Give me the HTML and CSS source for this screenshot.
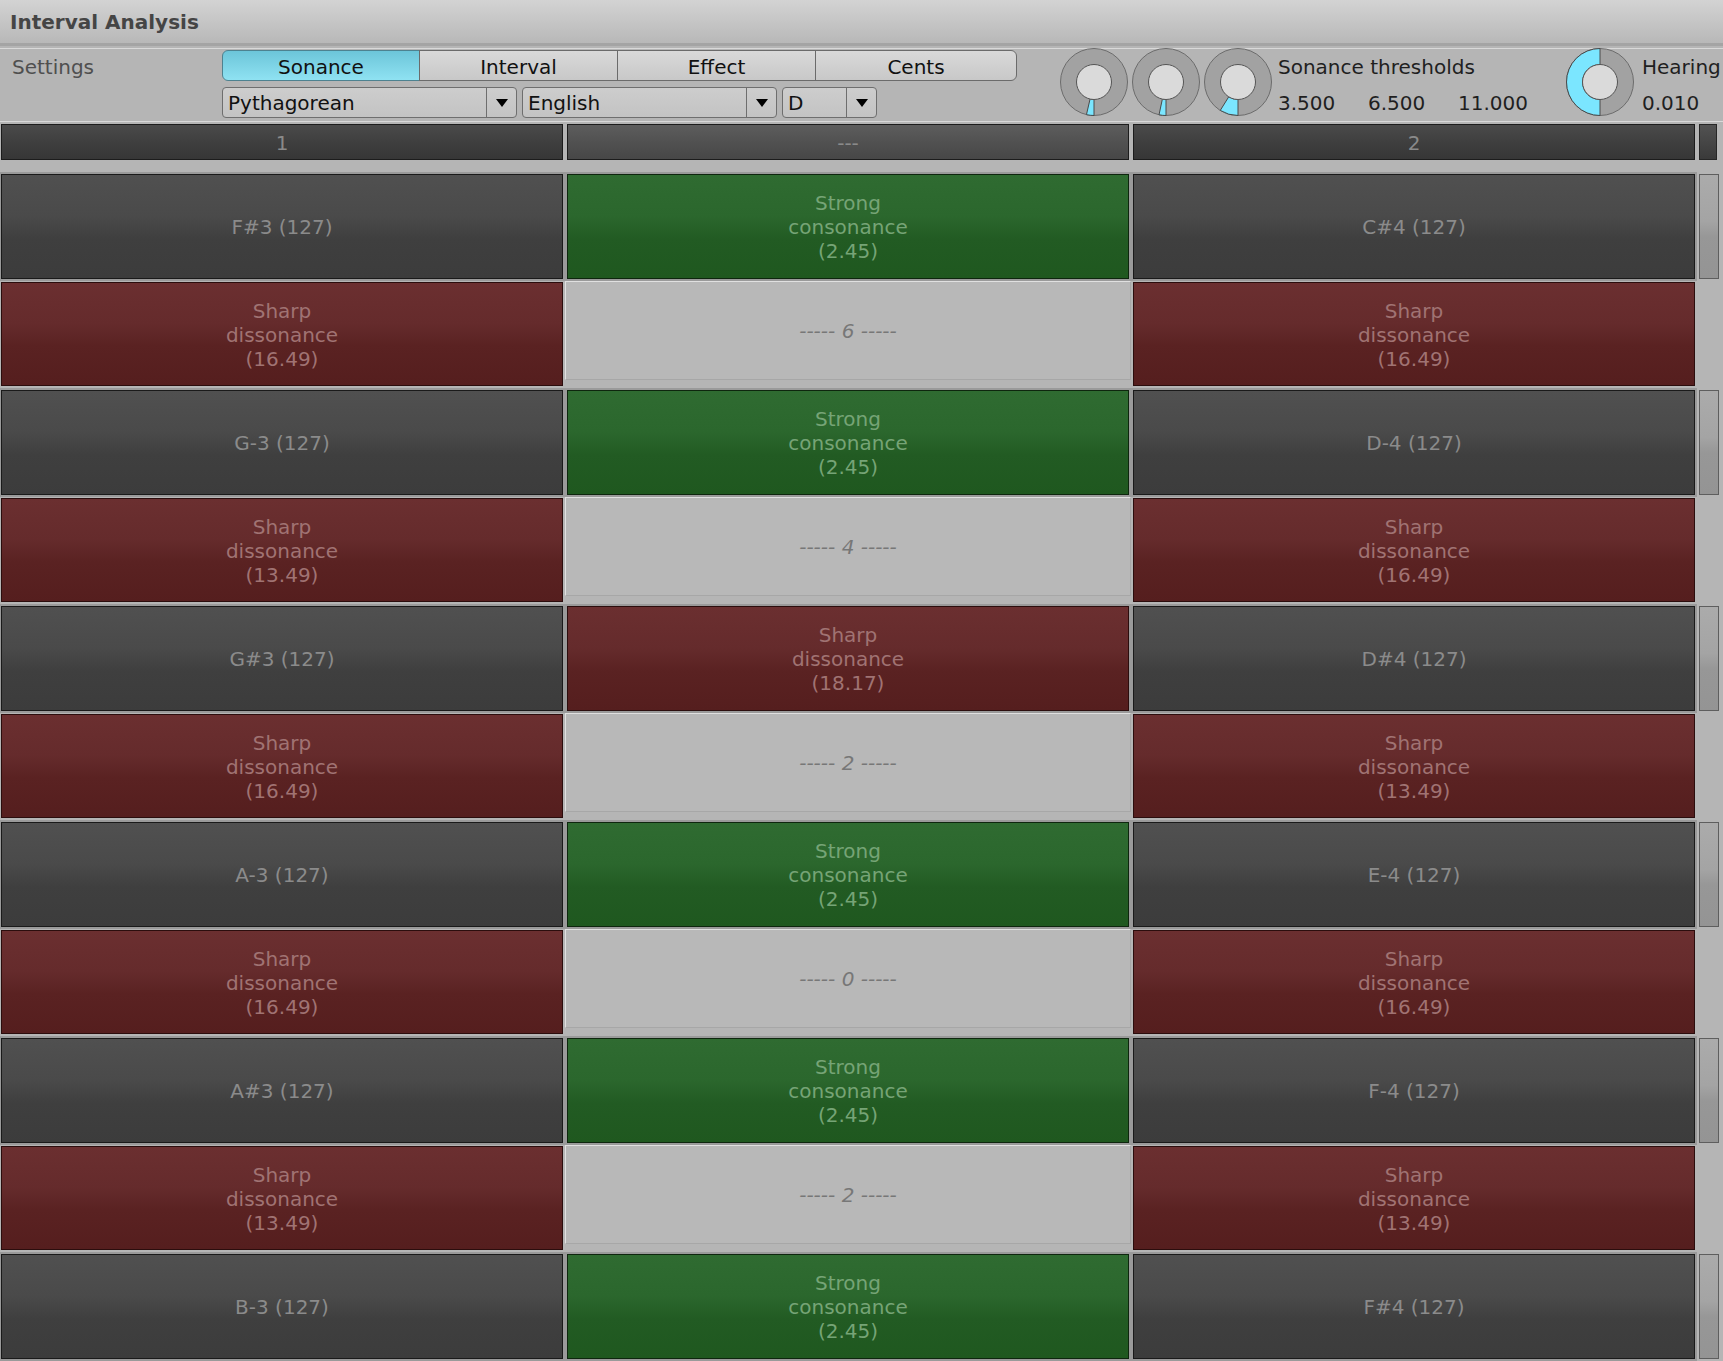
FILE: index.html
```html
<!DOCTYPE html>
<html lang="en">
<head>
<meta charset="utf-8">
<title>Interval Analysis</title>
<link rel="stylesheet" href="styles.css">
</head>
<body>
<div class="titlebar">Interval Analysis</div>

<div class="settings">
  <div class="settings-label">Settings</div>
  <div class="controls">
    <div class="tabs">
      <div class="tab tab-1 active">Sonance</div>
      <div class="tab tab-2">Interval</div>
      <div class="tab tab-3">Effect</div>
      <div class="tab tab-4">Cents</div>
    </div>
    <div class="selects">
      <div class="select sel-tuning"><span class="select-text">Pythagorean</span><span class="select-arrow"><svg width="12" height="8" viewBox="0 0 12 8"><polygon points="0,0 12,0 6,8" fill="#000"/></svg></span></div>
      <div class="select sel-lang"><span class="select-text">English</span><span class="select-arrow"><svg width="12" height="8" viewBox="0 0 12 8"><polygon points="0,0 12,0 6,8" fill="#000"/></svg></span></div>
      <div class="select sel-key"><span class="select-text">D</span><span class="select-arrow"><svg width="12" height="8" viewBox="0 0 12 8"><polygon points="0,0 12,0 6,8" fill="#000"/></svg></span></div>
    </div>
  </div>
  <div class="knobs">
    <svg class="knob" width="68" height="68" viewBox="0 0 68 68">
      <circle cx="34" cy="34" r="33.5" fill="#a2a2a2" stroke="#6c6c6c" stroke-width="1"/>
      <path d="M34 51.5 L34 67.5 A33.5 33.5 0 0 1 26.46 66.63 L30.06 51.05 A17.5 17.5 0 0 0 34 51.5 Z" fill="#7be6ff" stroke="#4a4a4a" stroke-width="1"/>
      <circle cx="34" cy="34" r="17.5" fill="#dadada" stroke="#555" stroke-width="1"/>
    </svg>
    <svg class="knob" width="68" height="68" viewBox="0 0 68 68">
      <circle cx="34" cy="34" r="33.5" fill="#a2a2a2" stroke="#6c6c6c" stroke-width="1"/>
      <path d="M34 51.5 L34 67.5 A33.5 33.5 0 0 1 27.03 66.77 L30.36 51.12 A17.5 17.5 0 0 0 34 51.5 Z" fill="#7be6ff" stroke="#4a4a4a" stroke-width="1"/>
      <circle cx="34" cy="34" r="17.5" fill="#dadada" stroke="#555" stroke-width="1"/>
    </svg>
    <svg class="knob" width="68" height="68" viewBox="0 0 68 68">
      <circle cx="34" cy="34" r="33.5" fill="#a2a2a2" stroke="#6c6c6c" stroke-width="1"/>
      <path d="M34 51.5 L34 67.5 A33.5 33.5 0 0 1 16.25 62.41 L24.73 48.84 A17.5 17.5 0 0 0 34 51.5 Z" fill="#7be6ff" stroke="#4a4a4a" stroke-width="1"/>
      <circle cx="34" cy="34" r="17.5" fill="#dadada" stroke="#555" stroke-width="1"/>
    </svg>
  </div>
  <div class="readout thresholds">
    <div class="readout-line">Sonance thresholds</div>
    <div class="readout-line second"><span class="val">3.500</span><span class="val">6.500</span><span>11.000</span></div>
  </div>
  <svg class="knob hearing-knob" width="68" height="68" viewBox="0 0 68 68">
    <circle cx="34" cy="34" r="33.5" fill="#a2a2a2" stroke="#6c6c6c" stroke-width="1"/>
    <path d="M34 51.5 L34 67.5 A33.5 33.5 0 0 1 34 0.5 L34 16.5 A17.5 17.5 0 0 0 34 51.5 Z" fill="#7be6ff" stroke="#4a4a4a" stroke-width="1"/>
    <circle cx="34" cy="34" r="17.5" fill="#dadada" stroke="#555" stroke-width="1"/>
  </svg>
  <div class="readout hearing">
    <div class="readout-line">Hearing</div>
    <div class="readout-line second">0.010</div>
  </div>
</div>

<div class="header-row">
  <div class="hcell">1</div>
  <div class="hcell mid">---</div>
  <div class="hcell">2</div>
  <div class="hscroll"></div>
</div>

<div class="rows">
  <div class="row-note">
    <div class="frame">
      <div class="cell dark">F#3 (127)</div>
      <div class="cell green">Strong<br>consonance<br>(2.45)</div>
      <div class="cell dark">C#4 (127)</div>
    </div>
    <div class="thumb"></div>
  </div>
  <div class="row-diss">
    <div class="cell red">Sharp<br>dissonance<br>(16.49)</div>
    <div class="gap-panel">----- 6 -----</div>
    <div class="cell red">Sharp<br>dissonance<br>(16.49)</div>
  </div>

  <div class="row-note">
    <div class="frame">
      <div class="cell dark">G-3 (127)</div>
      <div class="cell green">Strong<br>consonance<br>(2.45)</div>
      <div class="cell dark">D-4 (127)</div>
    </div>
    <div class="thumb"></div>
  </div>
  <div class="row-diss">
    <div class="cell red">Sharp<br>dissonance<br>(13.49)</div>
    <div class="gap-panel">----- 4 -----</div>
    <div class="cell red">Sharp<br>dissonance<br>(16.49)</div>
  </div>

  <div class="row-note">
    <div class="frame">
      <div class="cell dark">G#3 (127)</div>
      <div class="cell red">Sharp<br>dissonance<br>(18.17)</div>
      <div class="cell dark">D#4 (127)</div>
    </div>
    <div class="thumb"></div>
  </div>
  <div class="row-diss">
    <div class="cell red">Sharp<br>dissonance<br>(16.49)</div>
    <div class="gap-panel">----- 2 -----</div>
    <div class="cell red">Sharp<br>dissonance<br>(13.49)</div>
  </div>

  <div class="row-note">
    <div class="frame">
      <div class="cell dark">A-3 (127)</div>
      <div class="cell green">Strong<br>consonance<br>(2.45)</div>
      <div class="cell dark">E-4 (127)</div>
    </div>
    <div class="thumb"></div>
  </div>
  <div class="row-diss">
    <div class="cell red">Sharp<br>dissonance<br>(16.49)</div>
    <div class="gap-panel">----- 0 -----</div>
    <div class="cell red">Sharp<br>dissonance<br>(16.49)</div>
  </div>

  <div class="row-note">
    <div class="frame">
      <div class="cell dark">A#3 (127)</div>
      <div class="cell green">Strong<br>consonance<br>(2.45)</div>
      <div class="cell dark">F-4 (127)</div>
    </div>
    <div class="thumb"></div>
  </div>
  <div class="row-diss">
    <div class="cell red">Sharp<br>dissonance<br>(13.49)</div>
    <div class="gap-panel">----- 2 -----</div>
    <div class="cell red">Sharp<br>dissonance<br>(13.49)</div>
  </div>

  <div class="row-note">
    <div class="frame">
      <div class="cell dark">B-3 (127)</div>
      <div class="cell green">Strong<br>consonance<br>(2.45)</div>
      <div class="cell dark">F#4 (127)</div>
    </div>
    <div class="thumb"></div>
  </div>
</div>
</body>
</html>
```

FILE: styles.css
```css
* { box-sizing: border-box; }

html, body {
  margin: 0;
  padding: 0;
  overflow: hidden;
}

body {
  width: 1723px;
  height: 1361px;
  background: #b5b5b5;
  font-family: "DejaVu Sans", "Noto Sans", sans-serif;
  font-size: 20px;
}

/* ---------- title bar ---------- */
.titlebar {
  height: 46px;
  line-height: 45px;
  padding-left: 10px;
  font-weight: bold;
  color: #454545;
  background: linear-gradient(#d3d3d3, #b8b8b8);
  border-bottom: 3px solid #a4a4a4;
}

/* ---------- settings ---------- */
.settings {
  display: flex;
  align-items: flex-start;
  height: 77px;
  padding-top: 4px;
  background: linear-gradient(to bottom,
    #b5b5b5 0, #b5b5b5 2px,
    #d9d9d9 2px, #d9d9d9 3px,
    #b5b5b5 3px, #b5b5b5 calc(100% - 2px),
    #d9d9d9 calc(100% - 2px), #d9d9d9 calc(100% - 1px),
    #b5b5b5 calc(100% - 1px));
}

.settings-label {
  width: 222px;
  padding-left: 12px;
  padding-top: 3px;
  line-height: 28px;
  color: #4f4f4f;
}

.controls { width: 795px; }

.tabs {
  display: flex;
  height: 31px;
}

.tab {
  flex: none;
  padding-top: 3px;
  line-height: 26px;
  text-align: center;
  color: #111;
  border: 1px solid #6b6b6b;
  background: linear-gradient(#d9d9d9, #c8c8c8);
}
.tab + .tab { margin-left: -1px; }
.tab-1 { width: 198px; border-radius: 6px 0 0 6px; }
.tab-2 { width: 199px; }
.tab-3 { width: 199px; }
.tab-4 { width: 202px; border-radius: 0 6px 6px 0; }
.tab.active {
  background: linear-gradient(#6cc5d9, #8fe2f2);
  border-color: #4d8290;
}

.selects {
  display: flex;
  gap: 5px;
  margin-top: 6px;
}

.select {
  display: flex;
  height: 31px;
  border: 1px solid #6e6e6e;
  border-radius: 4px;
  background: linear-gradient(#cdcdcd, #c3c3c3);
}
.sel-tuning { width: 295px; }
.sel-lang { width: 255px; }
.sel-key { width: 95px; }

.select-text {
  flex: 1;
  padding-left: 5px;
  padding-top: 2px;
  line-height: 27px;
  color: #111;
}

.select-arrow {
  width: 30px;
  border-left: 1px solid #6e6e6e;
  display: flex;
  align-items: center;
  justify-content: center;
}

.knobs {
  display: flex;
  gap: 4px;
  margin-left: 43px;
  margin-top: -2px;
}

.knob { display: block; }

.readout {
  margin-left: 6px;
  color: #1f1f1f;
}
.readout-line {
  padding-top: 3px;
  line-height: 28px;
  white-space: nowrap;
}
.readout-line.second { margin-top: 5px; }

.thresholds { width: 288px; }
.val {
  display: inline-block;
  width: 90px;
}

.hearing-knob { margin-top: -2px; }
.hearing { margin-left: 8px; }

/* ---------- header row ---------- */
.header-row {
  display: grid;
  grid-template-columns: 562px 562px 562px 18px;
  column-gap: 4px;
  padding-left: 1px;
  margin-top: 1px;
  height: 36px;
}

.hcell {
  border: 1px solid #1c1c1c;
  background: linear-gradient(#4a4a4a, #3f3f3f 50%, #363636);
  color: #8a8a8a;
  text-align: center;
  padding-top: 2px;
  line-height: 32px;
}
.hcell.mid {
  background: linear-gradient(#5d5d5d, #515151 50%, #474747);
}

.hscroll {
  border: 1px solid #262626;
  background: linear-gradient(#525252, #3a3a3a);
}

/* ---------- rows ---------- */
.rows { margin-top: 11.5px; }

.row-note {
  display: flex;
  height: 109px;
}

.frame {
  display: grid;
  grid-template-columns: 562px 562px 562px;
  column-gap: 4px;
  width: 1697px;
  padding: 2px 2px 2px 1px;
  background: #9a9a9a;
}

.thumb {
  width: 20px;
  margin: 2px 0 2px 2px;
  border: 1px solid #5e5e5e;
  background: linear-gradient(#ababab, #a4a4a4 45%, #979797 60%, #949494);
}

.row-diss {
  display: grid;
  grid-template-columns: 562px 562px 562px;
  column-gap: 4px;
  padding-left: 1px;
  height: 107px;
}
.row-diss .cell { margin: 1.5px 0 2px; }

.cell {
  display: flex;
  align-items: center;
  justify-content: center;
  text-align: center;
  padding-top: 2px;
  line-height: 24px;
  border: 1px solid #1a1a1a;
}

.cell.dark {
  color: #8b8b8b;
  background: linear-gradient(#505050, #4a4a4a 40%, #3f3f3f 62%, #3c3c3c);
}

.cell.red {
  color: #a07373;
  border-color: #2b0d0d;
  background: linear-gradient(#6b2f30, #652b2c 40%, #5a2222 62%, #551e1e);
}

.cell.green {
  color: #76a476;
  border-color: #0e260e;
  background: linear-gradient(#2f6b31, #2b672d 40%, #225b23 62%, #1f581f);
}

.gap-panel {
  margin: 0 -2px 7.5px;
  padding-top: 2px;
  border: 1px solid;
  border-color: #e0e0e0 #a7a7a7 #a7a7a7 #e0e0e0;
  background: #b8b8b8;
  display: flex;
  align-items: center;
  justify-content: center;
  font-style: italic;
  color: #777;
  white-space: pre;
}
```
